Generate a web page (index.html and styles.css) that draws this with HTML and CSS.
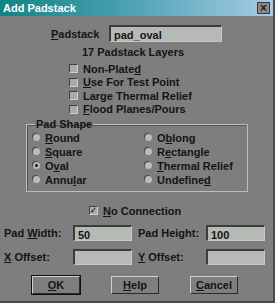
FILE: index.html
```html
<!DOCTYPE html>
<html lang="en">

<head>
    <meta charset="UTF-8">
    <title>Add Padstack</title>
    <link rel="stylesheet" href="styles.css">
</head>

<body>
    <div class="window">
        <div class="titlebar">
            <span class="title">Add Padstack</span>
            <span class="close">&#215;</span>
        </div>

        <div class="content">
            <div class="name-row">
                <label class="name-label"><u>P</u>adstack</label>
                <div class="field name-field">pad_oval</div>
            </div>
            <div class="layers">17 Padstack Layers</div>

            <div class="checks">
                <div class="check"><span class="box"></span>Non-Plate<u>d</u></div>
                <div class="check"><span class="box"></span><u>U</u>se For Test Point</div>
                <div class="check"><span class="box"></span>Large Thermal Relief</div>
                <div class="check"><span class="box"></span><u>F</u>lood Planes/Pours</div>
            </div>

            <fieldset class="shape">
                <legend>Pad Shape</legend>
                <div class="radios">
                    <div class="radio"><span class="dot"></span><u>R</u>ound</div>
                    <div class="radio"><span class="dot"></span>O<u>b</u>long</div>
                    <div class="radio"><span class="dot"></span><u>S</u>quare</div>
                    <div class="radio"><span class="dot"></span>R<u>e</u>ctangle</div>
                    <div class="radio"><span class="dot on"></span>O<u>v</u>al</div>
                    <div class="radio"><span class="dot"></span><u>T</u>hermal Relief</div>
                    <div class="radio"><span class="dot"></span>Annu<u>l</u>ar</div>
                    <div class="radio"><span class="dot"></span>Undefine<u>d</u></div>
                </div>
            </fieldset>

            <div class="check noconn"><span class="box checked">&#10003;</span><u>N</u>o Connection</div>

            <div class="grid">
                <label>Pad <u>W</u>idth:</label>
                <div class="field">50</div>
                <label>Pad Hei<u>g</u>ht:</label>
                <div class="field">100</div>
                <label><u>X</u> Offset:</label>
                <div class="field"></div>
                <label><u>Y</u> Offset:</label>
                <div class="field"></div>
            </div>

            <div class="buttons">
                <button class="default"><u>O</u>K</button>
                <button><u>H</u>elp</button>
                <button><u>C</u>ancel</button>
            </div>
        </div>
    </div>
</body>

</html>
```

FILE: styles.css
```css
body {
    margin: 0;
    font-family: "Liberation Sans", Arial, sans-serif;
    font-size: 11px;
    font-weight: bold;
    color: #141414;
}

.window {
    width: 275px;
    height: 303px;
    box-sizing: border-box;
    background-color: #7e7e7e;
    border-right: 2px solid #4a4a4a;
    border-bottom: 2px solid #4a4a4a;
    overflow: hidden;
}

.titlebar {
    height: 16px;
    display: flex;
    align-items: center;
    justify-content: space-between;
    padding: 0 3px 0 3px;
    background: linear-gradient(to right, #0f8585, #4aa0b0 45%, #a8cbe8);
}

.title {
    color: #ffffff;
    font-size: 11px;
}

.close {
    width: 11px;
    height: 10px;
    line-height: 10px;
    text-align: center;
    font-size: 12px;
    color: #202020;
    background-color: #8a8a8a;
    border: 1px solid #3a3a3a;
}

u {
    text-decoration: underline;
}

.name-row {
    display: flex;
    align-items: center;
    margin-top: 9px;
    padding-left: 51px;
}

.name-label {
    width: 58px;
}

.field {
    height: 17px;
    box-sizing: border-box;
    padding: 2px 3px;
    background-color: #b5bbb4;
    border-top: 2px solid #3c3c3c;
    border-left: 2px solid #3c3c3c;
    border-right: 1px solid #c8c8c8;
    border-bottom: 1px solid #c8c8c8;
    font-size: 11px;
}

.name-field {
    width: 113px;
}

.layers {
    text-align: center;
    margin-top: 4px;
    padding-right: 7px;
}

.checks {
    margin-top: 4px;
    padding-left: 69px;
}

.check {
    display: flex;
    align-items: center;
    height: 13.5px;
}

.box {
    width: 9px;
    height: 9px;
    box-sizing: border-box;
    margin-right: 5px;
    background-color: #aaaaaa;
    border-top: 1px solid #404040;
    border-left: 1px solid #404040;
    border-right: 1px solid #d0d0d0;
    border-bottom: 1px solid #d0d0d0;
    font-size: 8px;
    line-height: 7px;
    text-align: center;
    color: #202020;
}

.shape {
    margin: 2px 0 0 26px;
    width: 222px;
    height: 74px;
    box-sizing: border-box;
    padding: 3px 0 0 6px;
    border: 1px solid #bdbdbd;
    box-shadow: inset 1px 1px 0 #555555;
}

.shape legend {
    padding: 0 1px;
    margin-left: 2px;
}

.radios {
    display: grid;
    grid-template-columns: 112px auto;
    row-gap: 1px;
    margin-top: -2px;
}

.radio {
    display: flex;
    align-items: center;
    height: 13px;
}

.dot {
    width: 7px;
    height: 7px;
    border-radius: 50%;
    margin-right: 5px;
    background-color: #bcbcbc;
    box-shadow: -1px -1px 0 #4a4a4a;
    position: relative;
}

.dot.on::after {
    content: "";
    position: absolute;
    left: 2px;
    top: 2px;
    width: 3px;
    height: 3px;
    border-radius: 50%;
    background-color: #101010;
}

.noconn {
    margin: 12px 0 0 89px;
}

.grid {
    display: grid;
    grid-template-columns: 65px 59px 66px 59px;
    column-gap: 4px;
    row-gap: 8px;
    align-items: center;
    margin: 7px 0 0 4px;
}

.grid label:nth-of-type(2),
.grid label:nth-of-type(4) {
    padding-left: 2px;
}

.grid .field {
    height: 16px;
}

.buttons {
    display: flex;
    gap: 31px;
    margin: 11px 0 0 32px;
}

button {
    width: 48px;
    height: 18px;
    padding: 0;
    font-family: inherit;
    font-size: 11px;
    font-weight: bold;
    color: #141414;
    background-color: #7e7e7e;
    border-top: 1px solid #d0d0d0;
    border-left: 1px solid #d0d0d0;
    border-right: 1px solid #2a2a2a;
    border-bottom: 1px solid #2a2a2a;
}

button.default {
    outline: 1px solid #101010;
}
```
